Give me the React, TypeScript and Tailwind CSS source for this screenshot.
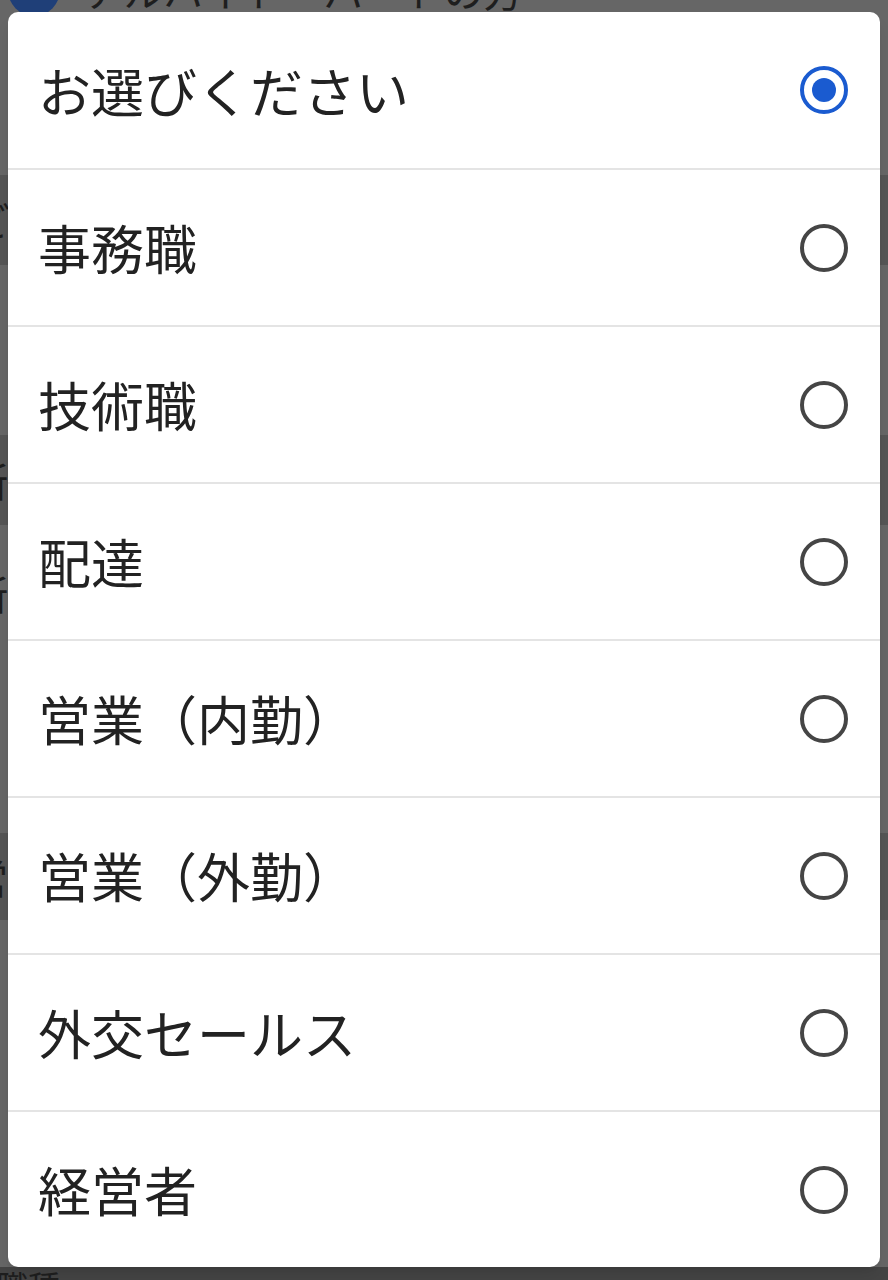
import React, { useState } from 'react';

const options = [
  'お選びください',
  '事務職',
  '技術職',
  '配達',
  '営業（内勤）',
  '営業（外勤）',
  '外交セールス',
  '経営者',
];

const font = { fontFamily: '"Noto Sans CJK JP", "Noto Sans", sans-serif' };

const Radio: React.FC<{ checked: boolean }> = ({ checked }) =>
  checked ? (
    <span className="w-12 h-12 rounded-full border-4 border-[#1a5bd0] flex items-center justify-center">
      <span className="w-6 h-6 rounded-full bg-[#1a5bd0]" />
    </span>
  ) : (
    <span className="w-12 h-12 rounded-full border-4 border-[#454545]" />
  );

const App: React.FC = () => {
  const [selected, setSelected] = useState(0);

  return (
    <div className="relative w-[888px] h-[1280px] bg-[#666666] overflow-hidden" style={font}>
      {/* dimmed form behind the picker */}
      <div className="flex flex-col text-[#1e1e1e]">
        <div className="h-[60px] -mt-[40px] flex items-center gap-6 pl-2">
          <span className="w-[52px] h-[52px] rounded-full bg-[#1f3f78] flex items-center justify-center">
            <svg width="28" height="28" viewBox="0 0 24 24" fill="none" stroke="#8a8a8a" strokeWidth="3"><path d="M4 12l5 5L20 6" /></svg>
          </span>
          <span className="text-[40px] leading-none">アルバイト・パートの方</span>
        </div>
        <div className="h-[155px]" />
        <div className="h-[90px] bg-[#555555] flex items-center -ml-[30px] text-[40px]">ご</div>
        <div className="h-[170px]" />
        <div className="h-[90px] bg-[#555555] flex items-center -ml-[32px] text-[40px]">所</div>
        <div className="h-[135px] flex items-center -ml-[32px] text-[40px]">所</div>
        <div className="h-[173px]" />
        <div className="h-[87px] bg-[#555555] flex items-center -ml-[32px] text-[40px]">営</div>
        <div className="h-[347px]" />
        <div className="h-[40px] bg-[#444444] flex items-start -ml-[4px] text-[32px] leading-none pt-[2px]">職種</div>
      </div>

      {/* picker dialog */}
      <div className="absolute left-[8px] top-[12px] w-[872px] h-[1255px] bg-white rounded-[10px] flex flex-col overflow-hidden shadow-lg">
        {options.map((label, i) => (
          <button
            key={label}
            onClick={() => setSelected(i)}
            className={`shrink-0 flex items-center justify-between pl-[30px] pr-8 text-left ${i > 0 ? 'border-t-2 border-[#e4e4e4] h-[157px]' : 'h-[156px]'}`}
          >
            <span className="text-[53px] leading-none text-[#222222]">{label}</span>
            <Radio checked={selected === i} />
          </button>
        ))}
      </div>
    </div>
  );
};

export default App;
